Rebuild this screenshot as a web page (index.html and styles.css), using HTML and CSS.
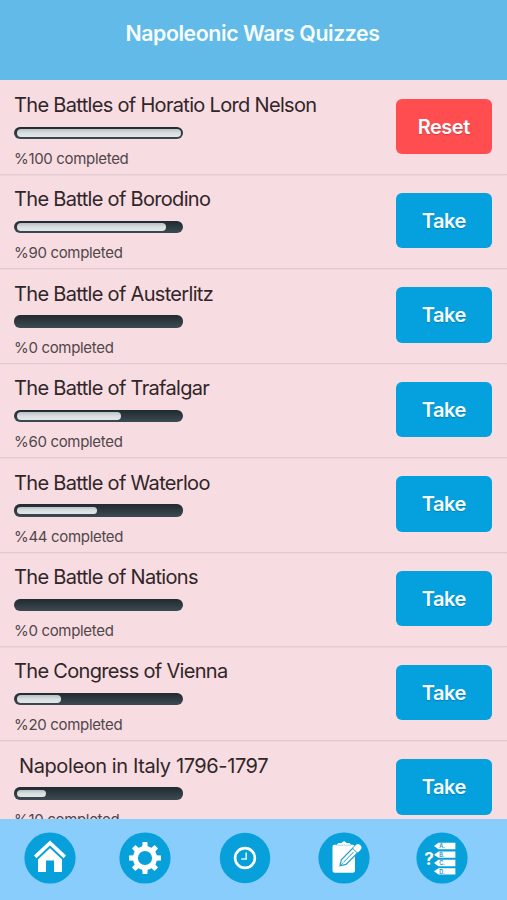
FILE: index.html
```html
<!DOCTYPE html>
<html lang="en">
<head>
<meta charset="utf-8">
<title>Napoleonic Wars Quizzes</title>
<link rel="stylesheet" href="styles.css">
</head>
<body>
<div class="app">
  <header class="header"><h1>Napoleonic Wars Quizzes</h1></header>
  <main class="list">
    <section class="row"><div class="info"><h2>The Battles of Horatio Lord Nelson</h2><div class="bar"><div class="fill" style="--p:1"></div></div><p>%100 completed</p></div><button class="btn reset">Reset</button></section>
    <section class="row"><div class="info"><h2>The Battle of Borodino</h2><div class="bar"><div class="fill" style="--p:.9"></div></div><p>%90 completed</p></div><button class="btn">Take</button></section>
    <section class="row"><div class="info"><h2>The Battle of Austerlitz</h2><div class="bar"></div><p>%0 completed</p></div><button class="btn">Take</button></section>
    <section class="row"><div class="info"><h2>The Battle of Trafalgar</h2><div class="bar"><div class="fill" style="--p:.6"></div></div><p>%60 completed</p></div><button class="btn">Take</button></section>
    <section class="row"><div class="info"><h2>The Battle of Waterloo</h2><div class="bar"><div class="fill" style="--p:.44"></div></div><p>%44 completed</p></div><button class="btn">Take</button></section>
    <section class="row"><div class="info"><h2>The Battle of Nations</h2><div class="bar"></div><p>%0 completed</p></div><button class="btn">Take</button></section>
    <section class="row"><div class="info"><h2>The Congress of Vienna</h2><div class="bar"><div class="fill" style="--p:.2"></div></div><p>%20 completed</p></div><button class="btn">Take</button></section>
    <section class="row"><div class="info"><h2 class="indent">Napoleon in Italy 1796-1797</h2><div class="bar"><div class="fill" style="--p:.1"></div></div><p>%10 completed</p></div><button class="btn">Take</button></section>
  </main>
  <nav class="tabs">
    <svg class="tab" viewBox="0 0 52 52"><circle class="disc" cx="26" cy="26" r="25.6"/>
      <path class="w" d="M14 24.8 26 13.4 38 24.8V40H30V28.5H22V40H14Z"/>
      <path class="gap" d="M10.6 27.2 26 12.6 41.4 27.2"/>
      <path class="roof" d="M11.2 24.9 26 10.9 40.8 24.9"/></svg>
    <svg class="tab settings" viewBox="0 0 52 52"><circle class="disc" cx="26" cy="26" r="25.6"/>
      <g class="w"><path id="tooth" d="M23.2 16 23.6 10h4.8l.4 6Z"/><use href="#tooth" transform="rotate(45 26 26)"/><use href="#tooth" transform="rotate(90 26 26)"/><use href="#tooth" transform="rotate(135 26 26)"/><use href="#tooth" transform="rotate(180 26 26)"/><use href="#tooth" transform="rotate(225 26 26)"/><use href="#tooth" transform="rotate(270 26 26)"/><use href="#tooth" transform="rotate(315 26 26)"/></g>
      <circle class="ring" cx="26" cy="26" r="9.6"/></svg>
    <svg class="tab history" viewBox="0 0 52 52"><circle class="disc" cx="26" cy="26" r="25.2"/>
      <circle class="clock" cx="26" cy="26" r="9.9"/><path class="hands" d="M27.2 20.4V27H22.2"/></svg>
    <svg class="tab" viewBox="0 0 52 52"><circle class="disc" cx="26" cy="26" r="25.6"/>
      <path class="w" d="M16 12.8H19L20.3 11H23.5Q26 7.7 28.5 11H31.6L33 12.8H34.5Q37 12.8 37 15.3V38.2Q37 40.7 34.5 40.7H17Q14.5 40.7 14.5 38.2V14.5Q14.5 12.8 16 12.8Z"/>
      <path class="clipline" d="M18 13.2H33"/>
      <path class="pencil" d="M22 33.8 23.3 27.8 37.3 13.6 42.2 18.2 28 32.4Z"/>
      <path class="penline" d="M34.6 16.4 39.4 21M25.3 30.5 35.6 20M22.4 33.4 24.8 31"/>
      <path class="w" d="M35.2 15.8 38.2 12.8Q40 11.2 42.3 13.3 44.5 15.5 42.8 17.5L39.9 20.4Z"/></svg>
    <svg class="tab" viewBox="0 0 52 52"><circle class="disc" cx="26" cy="26" r="25.6"/>
      <text class="q" x="8.3" y="32.6">?</text>
      <g class="w"><path d="M18 14 22.5 10.7H39.4V17.2H22.5Z"/><path d="M18 22.7 22.5 19.4H39.4V25.7H22.5Z"/><path d="M18 31 22.5 27.8H39.4V34.2H22.5Z"/><path d="M18 39.3 22.5 36.2H39.4V42.4H22.5Z"/></g>
      <g class="opt"><text x="23.2" y="16.2">A.</text><text x="23.2" y="24.8">B.</text><text x="23.2" y="33.2">C.</text><text x="23.2" y="41.5">D.</text></g></svg>
  </nav>
</div>
</body>
</html>
```
FILE: styles.css
```css
* { box-sizing: border-box; margin: 0; padding: 0; }
body { font-family: Inter, "Liberation Sans", sans-serif; }
.app { width: 507px; height: 900px; display: flex; flex-direction: column; overflow: hidden; background: #f7dce1; }
.header { flex: none; height: 79.6px; padding-top: 19px; background: #61bae8; text-align: center; }
.header h1 { color: #f6fdff; font-size: 21.3px; line-height: 28px; font-weight: 600; letter-spacing: -.41px; white-space: nowrap; padding-right: 2px; }
.list { flex: 1; min-height: 0; overflow: hidden; }
.row { height: 94.4px; display: flex; justify-content: space-between; align-items: flex-start; padding: 0 15.5px 0 14px; }
.row + .row { background: linear-gradient(#e0c8ce, #eacfd5) top / 100% 1.5px no-repeat; }
.info { padding-top: 12.4px; }
h2 { height: 26px; line-height: 26px; font-size: 20px; font-weight: 400; letter-spacing: -.68px; color: #302629; white-space: nowrap; }
.indent { padding-left: 5px; letter-spacing: -.4px; }
.bar { width: 169px; height: 12.5px; margin-top: 8.6px; padding: 2.5px 2px 2px 2.5px; border-radius: 6px; background: linear-gradient(#202a30, #3d4a51); }
.fill { width: calc(15px + 149px * var(--p)); height: 7.5px; border-radius: 4px; background: linear-gradient(#b9c0c2, #d9dfe1 50%, #e2e8ea); }
.info p { margin-top: 10px; height: 20px; line-height: 20px; font-size: 15px; letter-spacing: -.32px; color: #51474a; white-space: nowrap; }
.btn { width: 95.5px; height: 55.5px; margin-top: 19px; border: 0; border-radius: 6px; background: #05a0de; color: #f5fcff; font: 600 20px/56px Inter, sans-serif; letter-spacing: -.5px; text-shadow: 0 1px 1px #0003; }
.reset { background: #ff4d50; }
.tabs { flex: none; height: 81px; padding: 12.5px 39px 0 24px; display: flex; justify-content: space-between; background: #88cdfb; }
.tab { width: 52px; height: 52px; }
.settings { margin: 0 1.5px 0 -3.5px; }
.history { margin-right: 0; }
.disc { fill: #07a0db; }
.w { fill: #fff; }
.gap { fill: none; stroke: #07a0db; stroke-width: 5; }
.roof { fill: none; stroke: #fff; stroke-width: 3.6; }
.ring { fill: none; stroke: #fff; stroke-width: 5; }
.clock { fill: none; stroke: #fff; stroke-width: 2.6; }
.hands { fill: none; stroke: #d5f3ff; stroke-width: 1.6; }
.clipline { fill: none; stroke: #85cce9; stroke-width: .7; }
.pencil { fill: #fff; stroke: #209fcd; stroke-width: 1.2; }
.penline { fill: none; stroke: #209fcd; stroke-width: 1; }
.q { fill: #fff; font: 700 17px Inter, sans-serif; }
.opt { fill: #238fb9; font: 600 5.5px Inter, sans-serif; }
```
